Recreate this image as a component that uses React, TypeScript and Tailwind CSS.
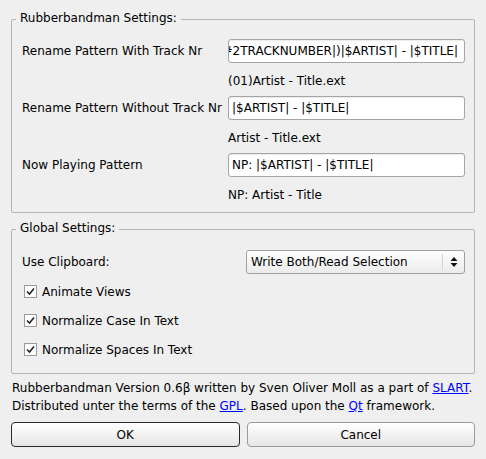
import { ReactNode } from 'react';

const Group = ({ title, children, className }: { title: string; children: ReactNode; className?: string }) => (
  <fieldset className={`border border-[#b4b4b4] rounded-[2px] mx-0 ${className ?? ''}`}>
    <legend className="-ml-[6px] px-[4px] leading-[14px] pb-[3px]">{title}</legend>
    {children}
  </fieldset>
);

const TextField = ({ value, scrolled }: { value: string; scrolled?: boolean }) => (
  <div
    className={`h-[24px] bg-white border border-[#a5a5a5] rounded-[3px] flex items-center overflow-hidden whitespace-nowrap shadow-[inset_0_1px_1px_rgba(0,0,0,0.08)] ${
      scrolled ? 'justify-end pr-[6px]' : 'pl-[3px]'
    }`}
  >
    <span>{value}</span>
  </div>
);

const Check = ({ label }: { label: string }) => (
  <div className="flex items-center h-[17px] gap-[5px] pl-[2px]">
    <div className="w-[13px] h-[13px] bg-white border border-[#9a9a9a] flex items-center justify-center">
      <svg width="9" height="9" viewBox="0 0 9 9">
        <path d="M1 4.5 L3.5 7 L8 1.5" fill="none" stroke="#222" strokeWidth="1.6" />
      </svg>
    </div>
    <span>{label}</span>
  </div>
);

const PatternRow = ({ label, value, hint, scrolled }: { label: string; value: string; hint: string; scrolled?: boolean }) => (
  <>
    <div className="h-[24px] flex items-center">{label}</div>
    <TextField value={value} scrolled={scrolled} />
    <div />
    <div className="h-[17px] leading-[17px] mt-[10px] mb-[6px] last:mb-0">{hint}</div>
  </>
);

export default function App() {
  return (
    <div
      className="w-[486px] h-[459px] bg-[#efefef] text-black text-[12px] px-[11px] pt-[11px] overflow-hidden"
      style={{ fontFamily: '"DejaVu Sans", sans-serif' }}
    >
      <Group title="Rubberbandman Settings:" className="pl-[10px] pr-[9px] pt-[11px] pb-[8px]">
        <div className="grid grid-cols-[206px_1fr]">
          <PatternRow
            label="Rename Pattern With Track Nr"
            value="(|#2TRACKNUMBER|)|$ARTIST| - |$TITLE|"
            hint="(01)Artist - Title.ext"
            scrolled
          />
          <PatternRow label="Rename Pattern Without Track Nr" value="|$ARTIST| - |$TITLE|" hint="Artist - Title.ext" />
          <PatternRow label="Now Playing Pattern" value="NP: |$ARTIST| - |$TITLE|" hint="NP: Artist - Title" />
        </div>
      </Group>

      <Group title="Global Settings:" className="mt-[8px] pl-[10px] pr-[9px] pt-[12px] pb-[15px]">
        <div className="flex items-center justify-between h-[24px]">
          <span>Use Clipboard:</span>
          <div className="w-[219px] h-[24px] border border-[#a0a0a0] rounded-[3px] bg-gradient-to-b from-white to-[#ebebeb] flex items-center">
            <span className="flex-1 pl-[4px]">Write Both/Read Selection</span>
            <div className="w-px h-[16px] bg-[#d4d4d4]" />
            <div className="w-[21px] flex justify-center">
              <svg width="8" height="12" viewBox="0 0 8 12">
                <path d="M4 1 L7.5 5 L0.5 5 Z M4 11 L7.5 7 L0.5 7 Z" fill="#111" />
              </svg>
            </div>
          </div>
        </div>
        <div className="flex flex-col gap-[12px] mt-[9px]">
          <Check label="Animate Views" />
          <Check label="Normalize Case In Text" />
          <Check label="Normalize Spaces In Text" />
        </div>
      </Group>

      <div className="mt-[5px] pl-[1px] leading-[18px]">
        <p>
          Rubberbandman Version 0.6β written by Sven Oliver Moll as a part of{' '}
          <a href="#" className="text-[#0000ff] underline">SLART</a>.
        </p>
        <p>
          Distributed unter the terms of the <a href="#" className="text-[#0000ff] underline">GPL</a>. Based upon the{' '}
          <a href="#" className="text-[#0000ff] underline">Qt</a> framework.
        </p>
      </div>

      <div className="grid grid-cols-2 gap-[7px] mt-[7px]">
        <button className="h-[25px] rounded-[4px] border border-[#2a2a2a] bg-gradient-to-b from-white to-[#e6e6e6]">OK</button>
        <button className="h-[25px] rounded-[4px] border border-[#9a9a9a] bg-gradient-to-b from-white to-[#e6e6e6]">Cancel</button>
      </div>
    </div>
  );
}
